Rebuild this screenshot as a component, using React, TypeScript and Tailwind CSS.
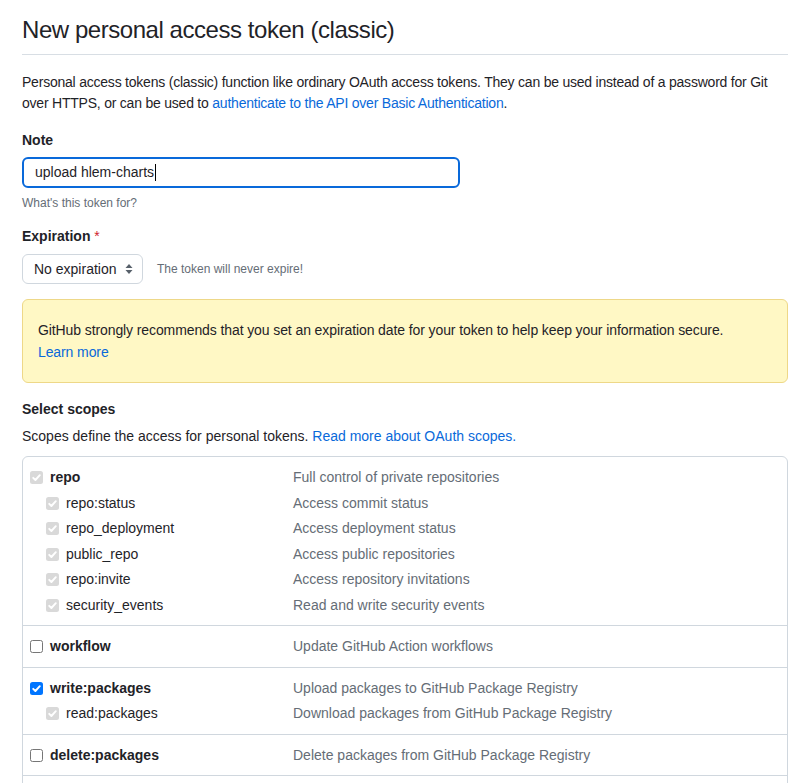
import React from "react";

type Box = "locked" | "on" | "off";

type Scope = { name: string; desc: string; box: Box; sub?: boolean };

const groups: Scope[][] = [
  [
    { name: "repo", desc: "Full control of private repositories", box: "locked" },
    { name: "repo:status", desc: "Access commit status", box: "locked", sub: true },
    { name: "repo_deployment", desc: "Access deployment status", box: "locked", sub: true },
    { name: "public_repo", desc: "Access public repositories", box: "locked", sub: true },
    { name: "repo:invite", desc: "Access repository invitations", box: "locked", sub: true },
    { name: "security_events", desc: "Read and write security events", box: "locked", sub: true },
  ],
  [{ name: "workflow", desc: "Update GitHub Action workflows", box: "off" }],
  [
    { name: "write:packages", desc: "Upload packages to GitHub Package Registry", box: "on" },
    { name: "read:packages", desc: "Download packages from GitHub Package Registry", box: "locked", sub: true },
  ],
  [{ name: "delete:packages", desc: "Delete packages from GitHub Package Registry", box: "off" }],
  [
    { name: "admin:org", desc: "Full control of orgs and teams, read and write org projects", box: "off" },
    { name: "write:org", desc: "Read and write org and team membership, read and write org projects", box: "off", sub: true },
    { name: "read:org", desc: "Read org and team membership, read org projects", box: "off", sub: true },
  ],
];

function Check({ box }: { box: Box }) {
  if (box === "off") {
    return <span className="block h-[13px] w-[13px] shrink-0 rounded-[2.5px] border border-[#767676] bg-white" />;
  }
  return (
    <span
      className={
        box === "on"
          ? "grid h-[13px] w-[13px] shrink-0 place-items-center rounded-[2.5px] bg-[#0075ff]"
          : "grid h-[13px] w-[13px] shrink-0 place-items-center rounded-[2.5px] bg-[#d9d9d9]"
      }
    >
      <svg viewBox="0 0 13 13" className="h-[13px] w-[13px]">
        <path d="M3.2 6.8 L5.4 9 L9.8 4.2" fill="none" stroke="white" strokeWidth="1.9" strokeLinecap="round" strokeLinejoin="round" />
      </svg>
    </span>
  );
}

export default function App() {
  return (
    <div
      className="min-h-screen bg-white px-[22px] text-[14px] text-[#1f2328]"
      style={{ fontFamily: '"Segoe UI", "Liberation Sans", Arial, sans-serif' }}
    >
      <div className="w-[766px]">
        <h1 className="border-b border-[#d8dee4] pt-[12px] pb-[6px] text-[24px] leading-[36px] font-normal tracking-[-0.45px]">
          New personal access token (classic)
        </h1>

        <p className="mt-[17px] leading-[21px] tracking-[-0.22px]">
          Personal access tokens (classic) function like ordinary OAuth access tokens. They can be used instead of a
          password for Git over HTTPS, or can be used to{" "}
          <a className="text-[#0969da]">authenticate to the API over Basic Authentication</a>.
        </p>

        <div className="mt-[16px] font-semibold leading-[21px]">Note</div>
        <div className="mt-[6px] flex h-[31px] w-[438px] items-center rounded-[6px] border-2 border-[#0969da] px-[11px]">
          <span>upload hlem-charts</span>
          <span className="ml-px h-[17px] w-px bg-black" />
        </div>
        <div className="mt-[6px] text-[12px] leading-[18px] text-[#656d76]">What's this token for?</div>

        <div className="mt-[14px] font-semibold leading-[21px]">
          Expiration <span className="font-normal text-[#cf222e]">*</span>
        </div>
        <div className="mt-[7px] flex items-center gap-[14px]">
          <div className="flex h-[30px] w-[121px] items-center justify-between rounded-[6px] border border-[#d0d7de] bg-white pl-[11px] pr-[9px]">
            <span>No expiration</span>
            <svg viewBox="0 0 8 12" className="h-[12px] w-[8px]">
              <path d="M4 1 L7.5 5 H0.5 Z M4 11 L7.5 7 H0.5 Z" fill="#57606a" />
            </svg>
          </div>
          <span className="text-[12px] text-[#656d76]">The token will never expire!</span>
        </div>

        <div className="mt-[15px] rounded-[6px] border border-[#eed888] bg-[#fff8c5] px-[15px] pt-[19px] pb-[19px] leading-[22px] tracking-[-0.1px]">
          GitHub strongly recommends that you set an expiration date for your token to help keep your information secure.
          <br />
          <a className="text-[#0969da]">Learn more</a>
        </div>

        <div className="mt-[16px] font-semibold leading-[21px]">Select scopes</div>
        <p className="mt-[6px] leading-[21px]">
          Scopes define the access for personal tokens.{" "}
          <a className="text-[#0969da]">Read more about OAuth scopes.</a>
        </p>

        <div className="mt-[9px] rounded-t-[6px] border border-[#d0d7de]">
          {groups.map((g, i) => (
            <div key={i} className={i > 0 ? "border-t border-[#d0d7de] pt-[8px] pb-[7px]" : "pt-[8px] pb-[7px]"}>
              {g.map((s) => (
                <div key={s.name} className="flex h-[25.5px] items-center">
                  <div className={s.sub ? "flex w-[270px] items-center gap-[7px] pl-[23px]" : "flex w-[270px] items-center gap-[7px] pl-[7px]"}>
                    <Check box={s.box} />
                    <span className={s.sub ? "" : "font-semibold"}>{s.name}</span>
                  </div>
                  <span className="text-[#656d76]">{s.desc}</span>
                </div>
              ))}
            </div>
          ))}
        </div>
      </div>
    </div>
  );
}
